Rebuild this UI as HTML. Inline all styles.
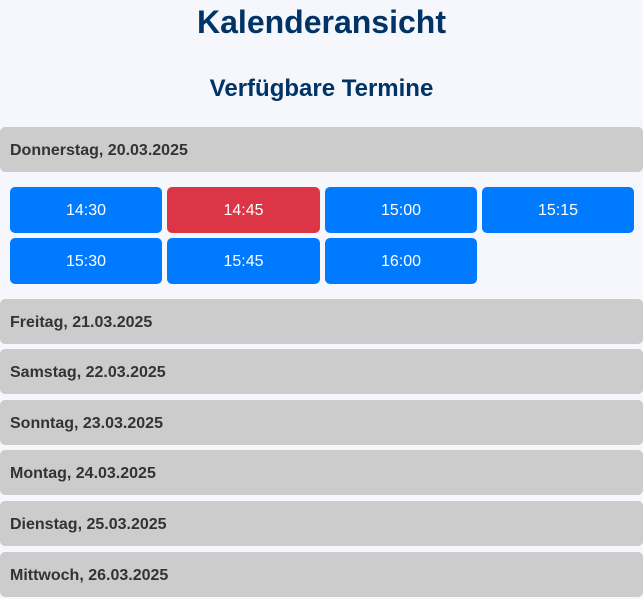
<!DOCTYPE html>
<html><head><meta charset="utf-8"><style>
body{margin:0;background:#f5f7fc;font-family:"Liberation Sans",sans-serif;width:643px;height:588px;overflow:hidden}
h1{margin:0;position:absolute;top:4px;left:0;width:643px;text-align:center;font-size:32px;color:#003366;line-height:37px}
h2{margin:0;position:absolute;top:74px;left:0;width:643px;text-align:center;font-size:24px;color:#003366;line-height:30px}
.d{position:absolute;left:0;width:643px;height:45px;background:#cccccc;border-radius:5px;color:#333;font-weight:bold;font-size:16px;line-height:47px;padding-left:10px;box-sizing:border-box}
.b{position:absolute;height:46px;border-radius:5px;background:#007bff;color:#fff;font-size:16px;line-height:48px;text-align:center}
.r{background:#dc3545}
</style></head><body>
<h1>Kalenderansicht</h1>
<h2>Verfügbare Termine</h2>
<div class="d" style="top:127px">Donnerstag, 20.03.2025</div>
<div class="b" style="left:10px;top:187px;width:152px">14:30</div>
<div class="b r" style="left:167px;top:187px;width:153px">14:45</div>
<div class="b" style="left:325px;top:187px;width:152px">15:00</div>
<div class="b" style="left:482px;top:187px;width:152px">15:15</div>
<div class="b" style="left:10px;top:238px;width:152px">15:30</div>
<div class="b" style="left:167px;top:238px;width:153px">15:45</div>
<div class="b" style="left:325px;top:238px;width:152px">16:00</div>
<div class="d" style="top:299px">Freitag, 21.03.2025</div>
<div class="d" style="top:349px">Samstag, 22.03.2025</div>
<div class="d" style="top:400px">Sonntag, 23.03.2025</div>
<div class="d" style="top:450px">Montag, 24.03.2025</div>
<div class="d" style="top:501px">Dienstag, 25.03.2025</div>
<div class="d" style="top:552px">Mittwoch, 26.03.2025</div>
</body></html>
